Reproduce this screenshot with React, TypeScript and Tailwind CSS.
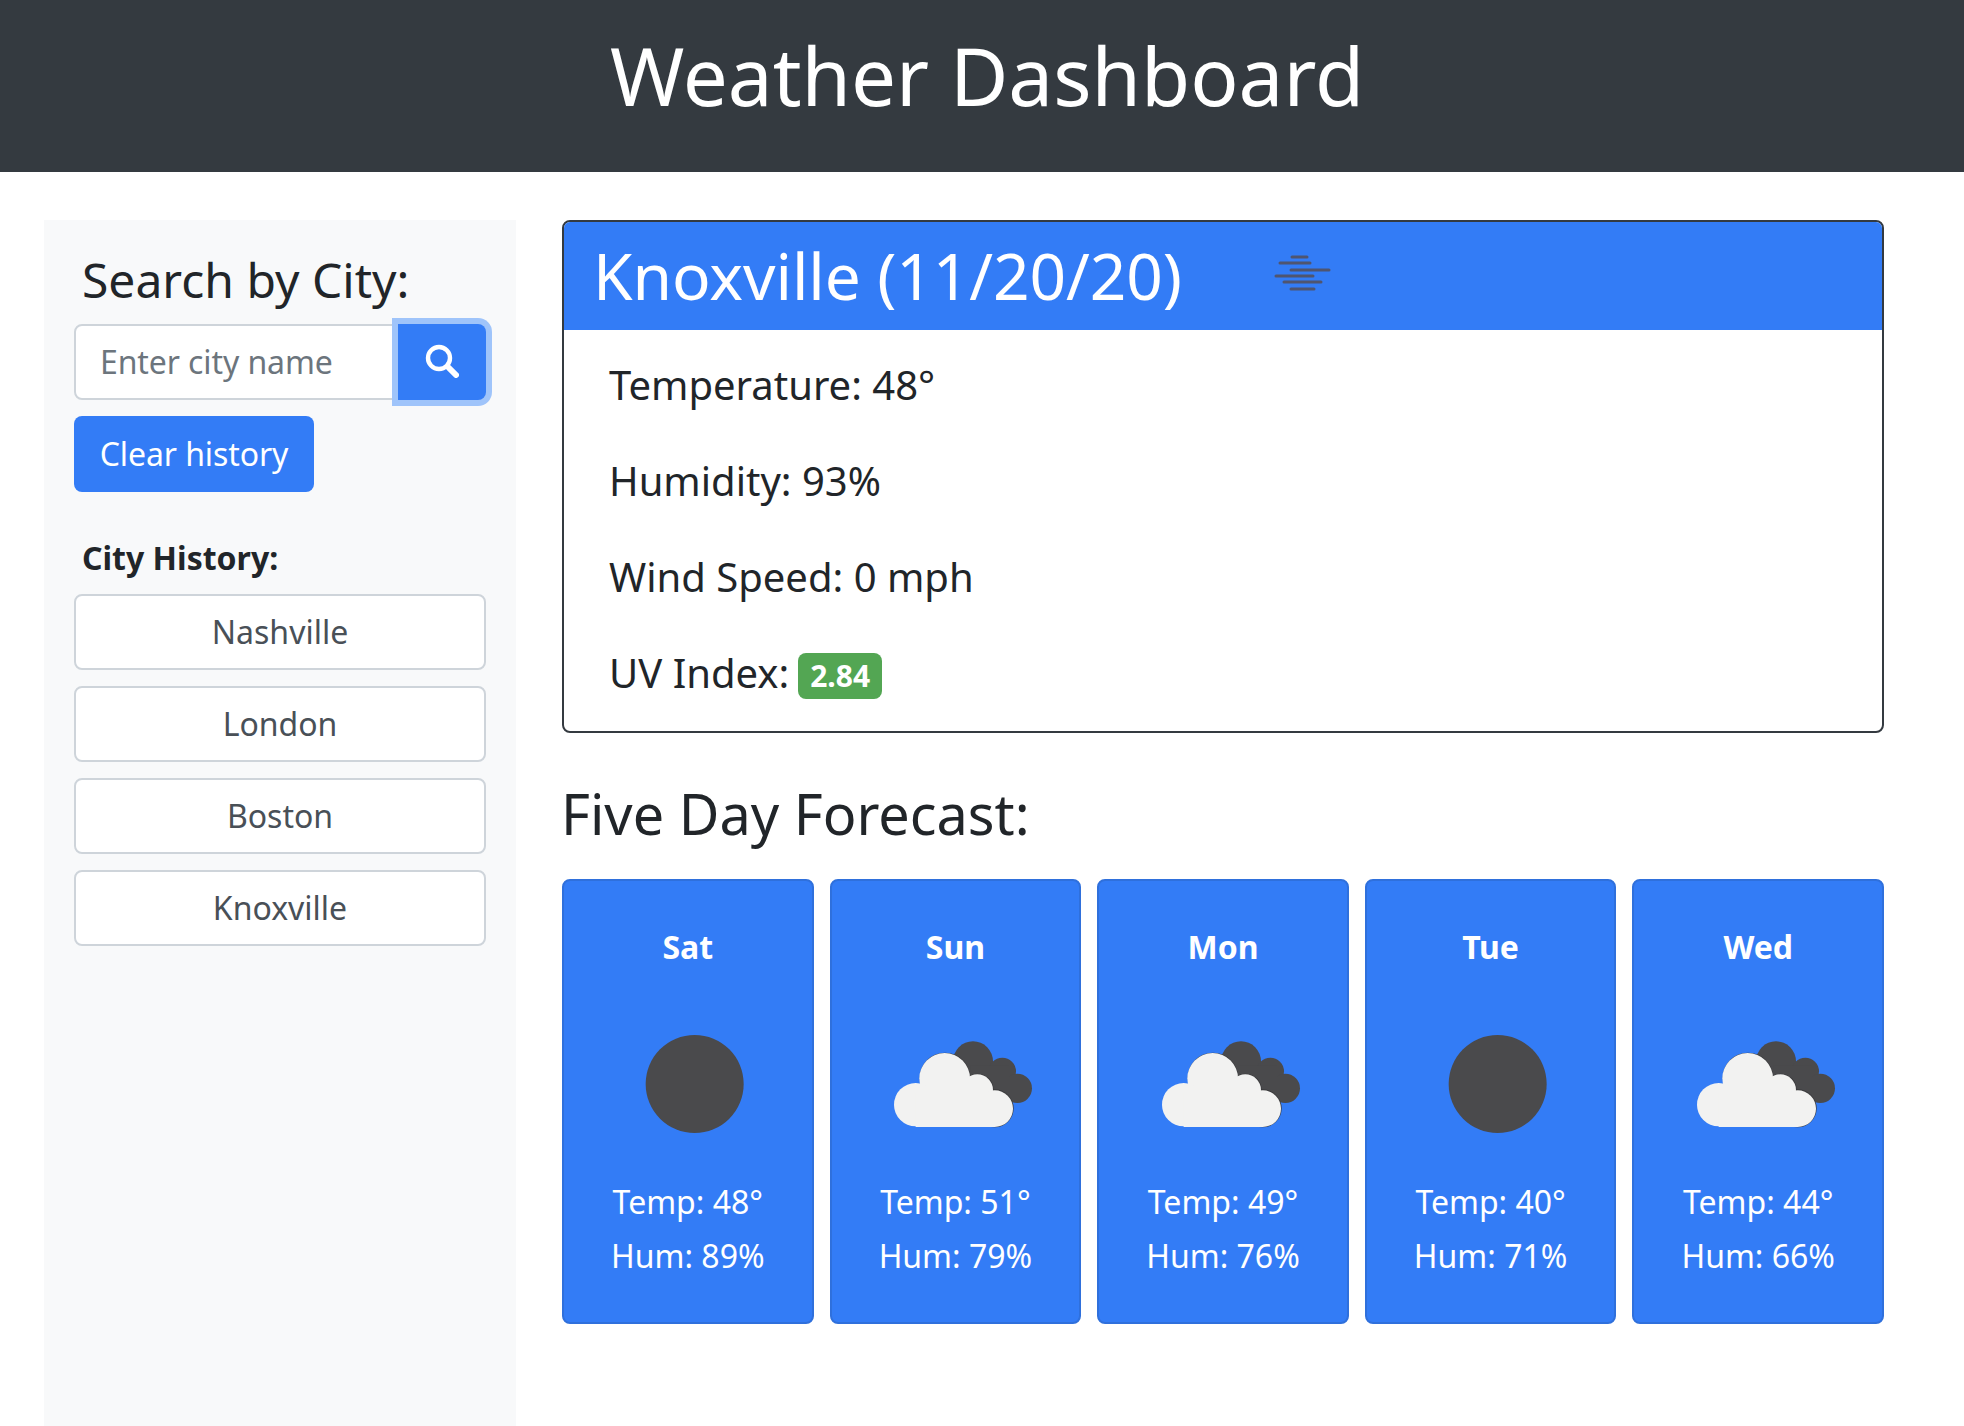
const cities = ["Nashville", "London", "Boston", "Knoxville"];

const forecast = [
  { day: "Sat", icon: "sun", temp: 48, hum: 89 },
  { day: "Sun", icon: "cloud", temp: 51, hum: 79 },
  { day: "Mon", icon: "cloud", temp: 49, hum: 76 },
  { day: "Tue", icon: "sun", temp: 40, hum: 71 },
  { day: "Wed", icon: "cloud", temp: 44, hum: 66 },
];

function SearchIcon() {
  return (
    <svg width="34" height="34" viewBox="0 0 34 34" fill="none" stroke="#ffffff" strokeLinecap="round" className="mb-[2px]">
      <circle cx="14" cy="14" r="11" strokeWidth="4.4" />
      <path d="M24 24l7 7" strokeWidth="6" />
    </svg>
  );
}

function MistIcon() {
  return (
    <svg width="60" height="42" viewBox="0 0 60 42" className="ml-[91px] mb-[8px] shrink-0 blur-[0.4px]">
      <g stroke="#4f5570" strokeWidth="3" strokeLinecap="round">
        <path d="M19 6h15" />
        <path d="M7 12h30" />
        <path d="M18 19h38" />
        <path d="M3 25h37" />
        <path d="M11 31h37" />
        <path d="M18 38h23" />
      </g>
    </svg>
  );
}

function WeatherIcon({ type }: { type: string }) {
  return (
    <svg width="190" height="140" viewBox="0 0 570 420" className="ml-[16px] mt-[38px] shrink-0">
      {type === "sun" ? (
        <circle cx="281" cy="225" r="147" fill="#4a4a4c" />
      ) : (
        <g transform="translate(8 0)">
          <g fill="#4a4a4c">
            <circle cx="307" cy="157" r="60" />
            <circle cx="395" cy="187" r="41" />
            <circle cx="440" cy="238" r="44" />
            <rect x="300" y="170" width="115" height="90" />
          </g>
          <g fill="#3a3a3c">
            <circle cx="223" cy="207" r="76" />
            <circle cx="321" cy="242" r="48" />
            <circle cx="372" cy="298" r="57" />
          </g>
          <g fill="#f2f2f1">
            <circle cx="222" cy="208" r="76" />
            <circle cx="135" cy="287" r="65" />
            <circle cx="320" cy="243" r="47" />
            <circle cx="372" cy="299" r="55" />
            <rect x="135" y="250" width="237" height="104" />
          </g>
        </g>
      )}
    </svg>
  );
}

export default function App() {
  return (
    <div className="min-h-screen flex flex-col bg-white text-[#212529] font-['Noto_Sans',sans-serif]">
      {/* Header */}
      <header className="h-[172px] bg-[#343a40] flex items-center justify-center pb-[22px] pl-[10px]">
        <h1 className="text-[80px] leading-[1.2] text-white">Weather Dashboard</h1>
      </header>

      <div className="flex-1 flex pl-[44px] pt-[48px]">
        {/* Sidebar */}
        <aside className="w-[472px] shrink-0 bg-[#f8f9fa] px-[30px] pt-[31px]">
          <h2 className="text-[48px] leading-[1.2] pl-[8px]">Search by City:</h2>
          <div className="flex mt-[15px] h-[76px]">
            <input
              placeholder="Enter city name"
              className="flex-1 min-w-0 bg-white border-2 border-[#ced4da] rounded-l-lg px-[24px] text-[32px] tracking-[-0.1px] placeholder:text-[#6c757d] outline-none"
            />
            <button className="relative z-10 w-[88px] bg-[#337cf6] rounded-r-lg ring-[6px] ring-[#9fc4fa] flex items-center justify-center">
              <SearchIcon />
            </button>
          </div>
          <button className="mt-[16px] h-[76px] w-[240px] bg-[#337cf6] rounded-lg text-white text-[32px] tracking-[-0.1px]">
            Clear history
          </button>
          <h3 className="mt-[42px] pl-[8px] text-[32px] leading-[48px] font-bold">City History:</h3>
          <div className="mt-[12px] flex flex-col gap-[16px]">
            {cities.map((city) => (
              <button
                key={city}
                className="h-[76px] bg-white border-2 border-[#ced4da] rounded-lg text-[32px] text-[#495057]"
              >
                {city}
              </button>
            ))}
          </div>
        </aside>

        {/* Main */}
        <main className="w-[1322px] ml-[46px]">
          <section className="border-2 border-[#343a40] rounded-lg overflow-hidden h-[513px]">
            <div className="h-[108px] bg-[#337cf6] flex items-center pl-[29px]">
              <h2 className="text-[64px] leading-[1.2] text-white tracking-[-0.1px]">Knoxville (11/20/20)</h2>
              <MistIcon />
            </div>
            <div className="pl-[45px] pt-[25px] flex flex-col gap-[36px] text-[40px] leading-[60px]">
              <p>Temperature: 48°</p>
              <p>Humidity: 93%</p>
              <p>Wind Speed: 0 mph</p>
              <p className="flex items-center">
                UV Index:
                <span className="ml-[9px] mt-[5px] px-[12px] h-[46px] flex items-center rounded-lg bg-[#53a653] text-white text-[30px] font-bold">
                  2.84
                </span>
              </p>
            </div>
          </section>

          <h2 className="mt-[47px] -ml-[1px] text-[55.8px] leading-[67px]">Five Day Forecast:</h2>

          <div className="mt-[32px] grid grid-cols-5 gap-[16px]">
            {forecast.map((f) => (
              <div
                key={f.day}
                className="h-[445px] bg-[#337cf6] border-2 border-[#2f70dc] rounded-lg text-white text-[32px] leading-[48px] flex flex-col items-center pt-[42px]"
              >
                <div className="font-bold">{f.day}</div>
                <WeatherIcon type={f.icon} />
                <div className="mt-[29px]">Temp: {f.temp}°</div>
                <div className="mt-[6px]">Hum: {f.hum}%</div>
              </div>
            ))}
          </div>
        </main>
      </div>
    </div>
  );
}
